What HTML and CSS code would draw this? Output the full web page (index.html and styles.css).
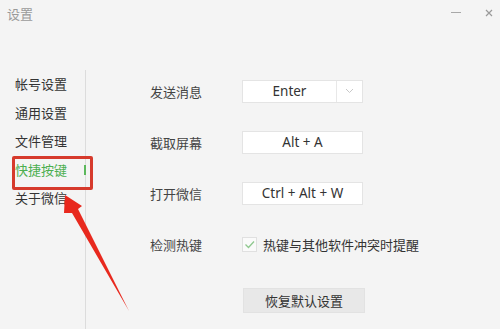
FILE: index.html
```html
<!DOCTYPE html>
<html lang="zh-CN">
<head>
<meta charset="utf-8">
<title>设置</title>
<link rel="stylesheet" href="styles.css">
</head>
<body>
<div class="window">
  <header class="titlebar">
    <span class="title">设置</span>
    <div class="controls">
      <span class="ctl-min"></span>
      <svg class="ctl-close" width="8" height="8" viewBox="0 0 8 8"><path d="M1 1L7 7M7 1L1 7" stroke="#9a9a9a" stroke-width="1.2" fill="none"/></svg>
    </div>
  </header>
  <div class="main">
    <nav class="sidebar">
      <div class="nav-item">帐号设置</div>
      <div class="nav-item">通用设置</div>
      <div class="nav-item">文件管理</div>
      <div class="nav-item active">快捷按键<span class="mark-box"></span></div>
      <div class="nav-item">关于微信</div>
    </nav>
    <section class="content">
      <div class="rows">
        <div class="label">发送消息</div>
        <div class="field select"><span class="val">Enter</span><span class="drop"><svg width="9" height="6" viewBox="0 0 9 6"><path d="M1 1L4.5 4.5L8 1" stroke="#c8c8c8" stroke-width="1" fill="none"/></svg></span></div>
        <div class="label">截取屏幕</div>
        <div class="field"><span class="val">Alt + A</span></div>
        <div class="label">打开微信</div>
        <div class="field"><span class="val">Ctrl + Alt + W</span></div>
        <div class="label">检测热键</div>
        <div class="check-row">
          <span class="checkbox"><svg width="13" height="13" viewBox="0 0 13 13"><path d="M2.5 6.5L5.5 9.5L11 3.5" stroke="#8fc88f" stroke-width="1.3" fill="none"/></svg></span>
          <span class="check-text">热键与其他软件冲突时提醒</span>
        </div>
      </div>
      <button class="reset">恢复默认设置</button>
    </section>
  </div>
  <svg class="arrow" width="500" height="329" viewBox="0 0 500 329"><polygon points="65,195 82,206 78,209 129,311 72,213 64,213" fill="#e8291e"/></svg>
</div>
</body>
</html>
```
FILE: styles.css
```css
* { box-sizing: border-box; }
html, body { margin: 0; padding: 0; }
body {
  width: 500px;
  height: 329px;
  background: #f4f4f4;
  font-family: "Noto Sans CJK SC", "Noto Sans", sans-serif;
  overflow: hidden;
}
.window {
  position: relative;
  width: 500px;
  height: 329px;
  display: flex;
  flex-direction: column;
  background: #f4f4f4;
}
.titlebar {
  height: 70px;
  flex: none;
  display: flex;
  justify-content: space-between;
  align-items: flex-start;
  padding: 4px 7px 0 7px;
}
.title {
  font-size: 13px;
  line-height: 20px;
  color: #9a9a9a;
}
.controls {
  display: flex;
  align-items: center;
  gap: 24px;
  padding-top: 3px;
  height: 14px;
}
.ctl-min {
  width: 10px;
  height: 1px;
  background: #a8a8a8;
}
.ctl-close { display: block; }
.main {
  flex: 1;
  display: flex;
}
.sidebar {
  width: 86px;
  flex: none;
  border-right: 1px solid #dcdcdc;
}
.nav-item {
  position: relative;
  height: 28.5px;
  line-height: 28.5px;
  padding-left: 15px;
  font-size: 13px;
  color: #333;
}
.nav-item.active { color: #4caf50; }
.nav-item.active::after {
  content: "";
  position: absolute;
  right: -1px;
  top: 9px;
  width: 2px;
  height: 10px;
  background: #5cb85c;
}
.mark-box {
  position: absolute;
  left: 12px;
  top: 0px;
  width: 81px;
  height: 34px;
  border: 3px solid #d63a2c;
  border-radius: 2px;
}
.content {
  flex: 1;
  padding: 9px 0 0 64px;
}
.rows {
  display: grid;
  grid-template-columns: 92px 121px;
  grid-auto-rows: 24px;
  row-gap: 27px;
  align-items: center;
}
.label {
  font-size: 13px;
  color: #444;
}
.field {
  height: 23px;
  background: #fff;
  border: 1px solid #e4e4e4;
  display: flex;
  align-items: center;
  font-size: 13.5px;
  color: #333;
}
.field .val {
  flex: 1;
  text-align: center;
  font-family: "Noto Sans", "Noto Sans CJK SC", sans-serif;
}
.field .drop {
  width: 26px;
  height: 100%;
  border-left: 1px solid #e8e8e8;
  display: flex;
  align-items: center;
  justify-content: center;
}
.check-row {
  display: flex;
  align-items: center;
  gap: 6px;
  white-space: nowrap;
}
.checkbox {
  width: 15px;
  height: 15px;
  border: 1px solid #e0e0e0;
  background: #fafafa;
  display: flex;
  align-items: center;
  justify-content: center;
}
.check-text {
  font-size: 13px;
  color: #333;
}
.reset {
  display: block;
  margin-top: 32px;
  margin-left: 93px;
  width: 122px;
  height: 25px;
  background: #e8e8e8;
  border: 1px solid #e2e2e2;
  border-radius: 0;
  font-family: "Noto Sans CJK SC", sans-serif;
  font-size: 13px;
  color: #333;
  padding: 0;
}
.arrow {
  position: absolute;
  left: 0;
  top: 0;
  pointer-events: none;
}
```
